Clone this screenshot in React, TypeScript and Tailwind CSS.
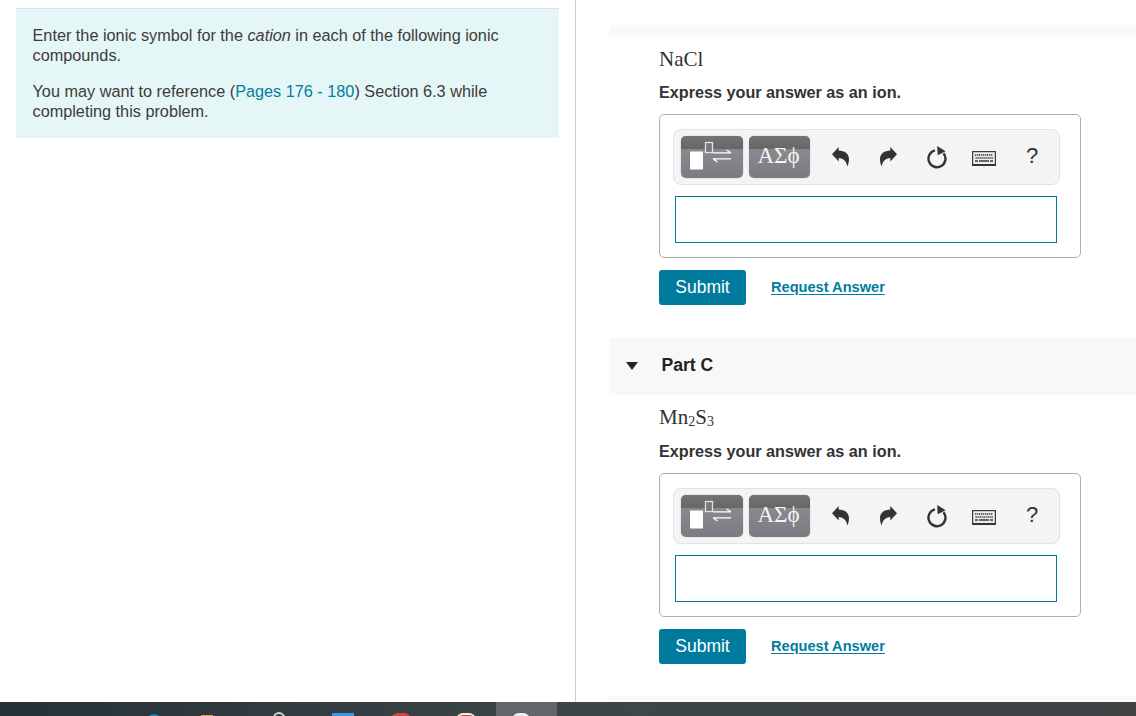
const sans = "font-['Liberation_Sans',Arial,sans-serif]";
const serif = "font-['Liberation_Serif','Times_New_Roman',serif]";

function TemplatesIcon() {
  return (
    <svg width="62" height="42" viewBox="0 0 62 42" className="block">
      <rect x="9" y="15.5" width="13" height="18" fill="#fff" />
      <rect x="24.5" y="6.5" width="7" height="10" fill="#77767b" stroke="#e2e2e4" strokeWidth="1.3" />
      <path d="M32 16.8h18M45.5 14l4.5 2.8M32 22.8h18M36.5 26l-4.5-3.2" fill="none" stroke="#fff" strokeWidth="1.3" />
    </svg>
  );
}

function UndoIcon({ flip = false }: { flip?: boolean }) {
  return (
    <svg width="17" height="20" viewBox="0 0 17 20" className={flip ? "-scale-x-100" : ""}>
      <path
        d="M0 7.3 6.7 0V3.4C12.5 3.6 17 6.5 17 12 17 15 16.3 17.8 15.3 19.5 14.8 15 11.5 11 6.7 11V14.6Z"
        fill="#333"
      />
    </svg>
  );
}

function ResetIcon() {
  return (
    <svg width="20" height="23" viewBox="0 0 20 23">
      <path d="M8 4.4A8.5 8.5 0 1 0 16.5 7.2" fill="none" stroke="#333" strokeWidth="2.4" />
      <path d="M10.2 0 18.6 5.2 10.7 9.2z" fill="#333" />
    </svg>
  );
}

function KeyboardIcon() {
  const keys = [0, 1, 2, 3, 4, 5, 6, 7, 8];
  return (
    <svg width="24" height="15" viewBox="0 0 24 15">
      <rect x="0.6" y="0.6" width="22.8" height="13.8" fill="#ececec" stroke="#3a3a3a" strokeWidth="1.2" />
      <rect x="1" y="13" width="22" height="1.6" fill="#333" />
      {keys.map((k) => (
        <rect key={`a${k}`} x={3 + k * 2} y="3" width="1.3" height="2" fill="#666" />
      ))}
      {keys.map((k) => (
        <rect key={`b${k}`} x={3.5 + k * 2} y="6" width="1.3" height="2" fill="#666" />
      ))}
      <rect x="3" y="9" width="3" height="2" fill="#666" />
      <rect x="7" y="9" width="10" height="2" fill="#666" />
      <rect x="18" y="9" width="3" height="2" fill="#666" />
    </svg>
  );
}

function ToolButton({ children, width }: { children: React.ReactNode; width: string }) {
  return (
    <div className={`relative h-[42px] ${width} overflow-hidden rounded-[5px] bg-gradient-to-b from-[#908f95] to-[#7c7b81] shadow-[0_0_1px_#888]`}>
      <div className="absolute inset-x-0 top-0 h-[13px] bg-gradient-to-b from-[#747474] to-[#666666]" />
      <div className="relative">{children}</div>
    </div>
  );
}

function AnswerBox() {
  return (
    <div className="mt-[10px] h-[144px] w-[422px] rounded-[5px] border border-[#b0b0b0] bg-white pl-[13px] pt-[14px]">
      <div className="flex h-[56px] w-[387px] items-center rounded-[8px] border border-[#e2e2e2] bg-[#f4f4f4] pl-[7px]">
        <ToolButton width="w-[62px]">
          <TemplatesIcon />
        </ToolButton>
        <div className="ml-[6px]">
          <ToolButton width="w-[61px]">
            <div className={`${serif} h-[42px] pr-[2px] text-center text-[23px] leading-[39px] text-[#f4f4f4]`}>
              ΑΣϕ
            </div>
          </ToolButton>
        </div>
        <div className="ml-[22px] flex items-center">
          <UndoIcon />
        </div>
        <div className="ml-[31px] flex items-center">
          <UndoIcon flip />
        </div>
        <div className="ml-[30px] flex items-center">
          <ResetIcon />
        </div>
        <div className="ml-[25px] mt-[3px] flex items-center">
          <KeyboardIcon />
        </div>
        <span className={`${sans} mb-[2px] ml-[30px] text-[22px] leading-none text-[#333]`}>?</span>
      </div>
      <div className="ml-[2px] mt-[11px] h-[47px] w-[382px] border border-[#007d9f] bg-white" />
    </div>
  );
}

function Question({ formula }: { formula: React.ReactNode }) {
  return (
    <div className="pl-[50px]">
      <div className={`${serif} flex h-[24px] items-center text-[21px] text-[#333]`}>{formula}</div>
      <p className="mt-[9px] h-[24px] text-[16.2px] font-bold leading-[24px] text-[#333]">
        Express your answer as an ion.
      </p>
      <AnswerBox />
      <div className="mt-[12px] flex items-center">
        <button className="h-[35px] w-[87px] rounded-[3px] bg-[#007b9e] text-[17.5px] font-normal text-white">
          Submit
        </button>
        <a className="ml-[25px] text-[14.6px] font-bold text-[#007d9f] underline underline-offset-2">Request Answer</a>
      </div>
    </div>
  );
}

export default function App() {
  return (
    <div className={`${sans} flex h-[716px] w-[1136px] flex-col overflow-hidden bg-white`}>
      <div className="flex h-[702px]">
        {/* instructions */}
        <div className="h-full w-[576px] border-r border-[#c9ccd2] pl-[16px] pr-[16px] pt-[8px]">
          <div className="h-[130px] w-[543px] border-t border-[#dedede] bg-[#e5f6f7] pl-[16.5px] pr-[40px] pt-[16px] text-[16.25px] leading-[20px] text-[#3c3c3c]">
            <p>
              Enter the ionic symbol for the <em>cation</em> in each of the following ionic compounds.
            </p>
            <p className="mt-[16px]">
              You may want to reference (<a className="text-[#007d9f]">Pages 176 - 180</a>) Section 6.3 while completing this problem.
            </p>
          </div>
        </div>

        {/* parts */}
        <div className="h-full flex-1 pl-[33px] pt-[25px]">
          <div className="h-[12px] bg-[#f9f9f9]" />
          <div className="pt-[10px]">
            <Question formula={<span className="pt-[2px]">NaCl</span>} />
          </div>
          <div className="mt-[33px] flex h-[57px] items-center bg-[#f8f8f8] pl-[17px]">
            <span className="mb-[2px] h-0 w-0 border-x-[6.5px] border-t-[8px] border-x-transparent border-t-[#222]" />
            <span className="ml-[23.5px] pb-[2px] text-[17.6px] font-bold text-[#222]">Part C</span>
          </div>
          <div className="pt-[11px]">
            <Question
              formula={
                <span className="pb-[2px] leading-none">
                  Mn<sub className="bottom-[-2px] text-[14px]">2</sub>S
                  <sub className="bottom-[-2px] text-[14px]">3</sub>
                </span>
              }
            />
          </div>
          <div className="mt-[32px] h-[6px] bg-[#f9f9f9]" />
        </div>
      </div>

      {/* desktop taskbar, cropped at the window edge */}
      <div className="flex h-[14px] overflow-hidden bg-gradient-to-r from-[#253239] via-[#3c4648] to-[#414345]">
        <span className="ml-[146px] mt-[12px] h-[16px] w-[16px] shrink-0 rounded-full bg-[#1480c8]" />
        <span className="ml-[39px] mt-[13px] h-[8px] w-[12px] shrink-0 bg-[#e0a526]" />
        <span className="ml-[60px] mt-[10px] h-[12px] w-[12px] shrink-0 rounded-full border-2 border-[#d0d0d0]" />
        <span className="ml-[47px] mt-[11px] h-[8px] w-[22px] shrink-0 bg-[#3b97e0]" />
        <span className="ml-[37px] mt-[11px] h-[14px] w-[20px] shrink-0 rounded-full bg-[#d2483c]" />
        <span className="ml-[45px] mt-[11px] h-[14px] w-[20px] shrink-0 rounded-full border-t-2 border-[#eee] bg-[#d9473c]" />
        <div className="ml-[20px] h-[14px] w-[61px] shrink-0 bg-[#636668] pl-[16px]">
          <span className="mt-[11px] block h-[14px] w-[18px] rounded-full bg-[#eee]" />
        </div>
      </div>
    </div>
  );
}
